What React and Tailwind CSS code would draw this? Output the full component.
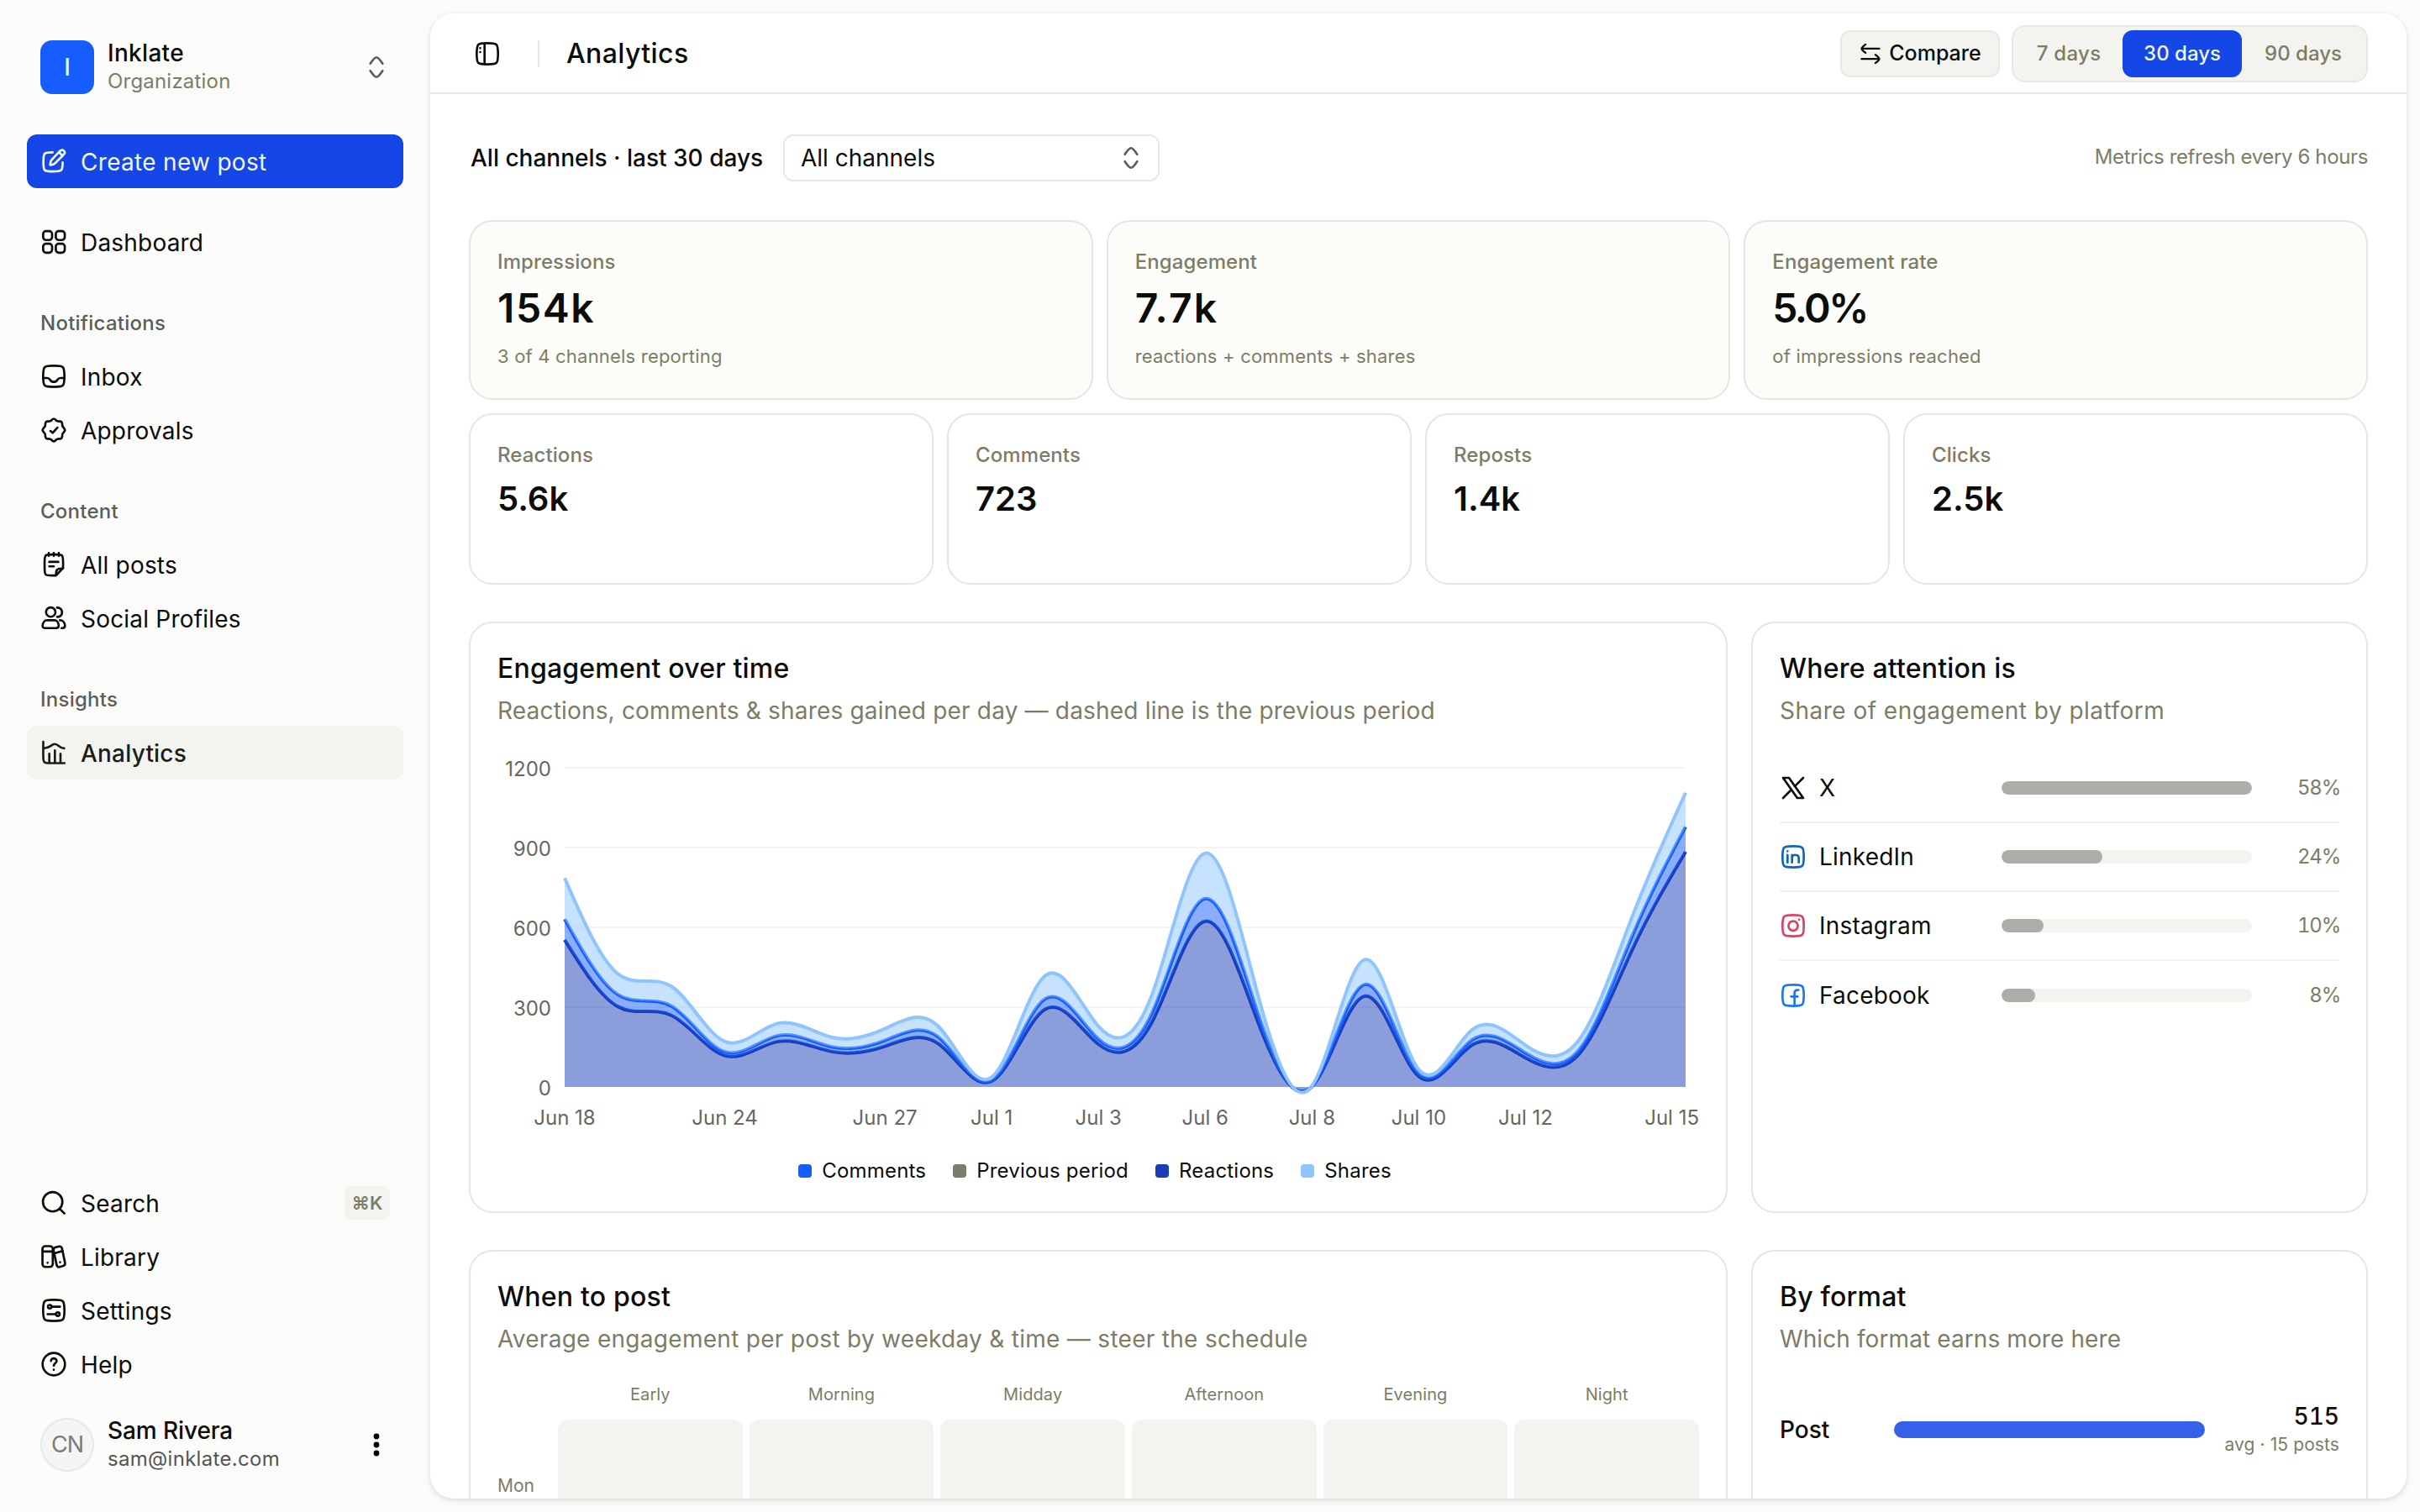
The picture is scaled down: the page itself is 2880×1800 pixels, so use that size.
import React from "react";

const SQUIRCLE =
  "M2.5 12C2.5 7.52 2.5 5.28 3.89 3.89C5.28 2.5 7.52 2.5 12 2.5C16.48 2.5 18.72 2.5 20.11 3.89C21.5 5.28 21.5 7.52 21.5 12C21.5 16.48 21.5 18.72 20.11 20.11C18.72 21.5 16.48 21.5 12 21.5C7.52 21.5 5.28 21.5 3.89 20.11C2.5 18.72 2.5 16.48 2.5 12Z";

function Icon({ className = "size-8", children, stroke = 2 }) {
  return (
    <svg
      viewBox="0 0 24 24"
      fill="none"
      stroke="currentColor"
      strokeWidth={stroke}
      strokeLinecap="round"
      strokeLinejoin="round"
      className={`shrink-0 ${className}`}
    >
      {children}
    </svg>
  );
}

const icons = {
  edit: (
    <>
      <path d="M11 4C7.2 4 5.1 4 3.9 5.2C2.75 6.4 2.75 8.5 2.75 12.5C2.75 16.6 2.75 18.7 3.9 19.9C5.1 21.1 7.2 21.1 11.3 21.1C15.4 21.1 17.5 21.1 18.7 19.9C19.9 18.7 19.9 16.7 19.9 13" />
      <path d="M16.7 3.6L18 2.5C18.9 1.8 20.2 1.8 21 2.6C21.9 3.4 21.9 4.7 21.1 5.6L20 6.9L13 13.9C12.1 14.8 10.6 15.2 8.9 15.4C8.7 13.9 9.1 12 10.2 10.6L16.7 3.6ZM16.7 3.9L19.8 7" />
    </>
  ),
  dashboard: (
    <>
      <rect x="2.5" y="2.3" width="8" height="8" rx="2.6" />
      <rect x="13.8" y="2.3" width="8" height="8" rx="2.6" />
      <rect x="2.5" y="13.6" width="8" height="8" rx="2.6" />
      <rect x="13.8" y="13.6" width="8" height="8" rx="2.6" />
    </>
  ),
  inbox: (
    <>
      <path d={SQUIRCLE} />
      <path d="M2.5 13.5H6C7.4 13.5 8.1 14.1 8.6 15C9.3 16.3 10.5 17 12 17C13.5 17 14.7 16.3 15.4 15C15.9 14.1 16.6 13.5 18 13.5H21.5" />
    </>
  ),
  approvals: (
    <>
      <path d="M12 1.9C13.2 1.9 14 3.6 15.1 4C16.2 4.5 18 3.8 18.9 4.7C19.8 5.6 19.4 7.4 19.8 8.5C20.3 9.6 22 10.7 22 12C22 13.3 20.3 14.4 19.8 15.5C19.4 16.6 19.8 18.4 18.9 19.3C18 20.2 16.2 19.5 15.1 20C14 20.4 13.2 22.1 12 22.1C10.8 22.1 10 20.4 8.9 20C7.8 19.5 6 20.2 5.1 19.3C4.2 18.4 4.6 16.6 4.2 15.5C3.7 14.4 2 13.3 2 12C2 10.7 3.7 9.6 4.2 8.5C4.6 7.4 4.2 5.6 5.1 4.7C6 3.8 7.8 4.5 8.9 4C10 3.6 10.8 1.9 12 1.9Z" />
      <path d="M9 12.8L11 14.5L15.2 9.8" />
    </>
  ),
  posts: (
    <>
      <path d="M7.5 1.8V4.4M12 1.8V4.4M16.5 1.8V4.4" />
      <path d="M3.8 10C3.8 6.7 3.8 5.1 4.8 4C5.8 3.1 7.3 3.1 10.4 3.1H13.7C16.8 3.1 18.3 3.1 19.3 4C20.3 5.1 20.3 6.7 20.3 10V15L14 21.9H10.4C7.3 21.9 5.8 21.9 4.8 20.9C3.8 19.9 3.8 18.3 3.8 15Z" />
      <path d="M14 21.5C14 17.6 14 15.4 20.2 15.6M8 9.7H16M8 13.7H12" />
    </>
  ),
  profiles: (
    <>
      <circle cx="9.3" cy="6.5" r="4.2" />
      <path d="M15 2.5C17.4 2.4 19.4 4 19.4 6.7C19.4 9.1 17.6 10.9 15 10.8" />
      <path d="M5.9 13.8H12.7C14.7 13.8 16.3 15.9 16.4 18.6C16.4 20 15.6 20.8 14.2 20.8H4.2C2.8 20.8 1.9 20 2 18.6C2.2 15.9 3.9 13.8 5.9 13.8Z" />
      <path d="M17.5 13.8C20.2 13.8 21.9 16 22 18.6C22 20 21.2 20.8 19.8 20.8H19" />
    </>
  ),
  analytics: (
    <>
      <path d="M2.6 2.4V15C2.6 18 2.6 19.5 3.6 20.5C4.5 21.4 6 21.4 9 21.4H21.6" />
      <path d="M8 13V20.5M13 10V20.5M18 13V20.5" />
      <path d="M2.8 7.9C8.5 8.6 9.5 4.3 13 4.3C16.3 4.3 16.7 8.2 21.3 8.2" />
    </>
  ),
  search: (
    <>
      <circle cx="11" cy="11" r="8.7" />
      <path d="M17.4 17.4L21.5 21.5" />
    </>
  ),
  library: (
    <>
      <rect x="1.9" y="2.6" width="9.2" height="18.6" rx="2.6" />
      <path d="M2.2 7.4H11M12.6 9L20 7" />
      <path d="M11.9 6.9C11.5 5.5 11.9 4.2 13.3 3.8L16.3 3C17.7 2.6 18.9 3.2 19.3 4.6L22 17.3C22.3 18.8 21.8 19.9 20.5 20.3L17.3 21.2C16 21.5 14.9 20.9 14.6 19.6Z" />
      <path d="M6.5 17.5V17.51M17.6 17V17.01" />
    </>
  ),
  settings: (
    <>
      <path d={SQUIRCLE} />
      <circle cx="8.4" cy="8.7" r="1.6" />
      <circle cx="15.6" cy="15.4" r="1.6" />
      <path d="M10.2 8.7H17.5M13.8 15.4H6.5" />
    </>
  ),
  help: (
    <>
      <circle cx="12" cy="12" r="10" />
      <path d="M9.5 9.2C9.5 7.8 10.6 6.8 12 6.8C13.4 6.8 14.6 7.8 14.6 9.2C14.6 11 12 11.2 12 13.4M12 16.9V17" />
    </>
  ),
  updown: (
    <path d="M17.5 8.8C17.5 8.8 13.8 3.2 12 3.2C10.2 3.2 6.5 8.8 6.5 8.8M17.5 15.2C17.5 15.2 13.8 20.8 12 20.8C10.2 20.8 6.5 15.2 6.5 15.2" />
  ),
  panel: (
    <>
      <path d={SQUIRCLE} />
      <path d="M9.5 2.8V21.2M5.6 7V7.01M5.6 10.5V10.51" />
    </>
  ),
  compare: (
    <>
      <path d="M21 6.8H3.4M7 2.5C7 2.5 3 5.6 3 6.8C3 8 7 11 7 11" />
      <path d="M3 17.3H20.6M17 13C17 13 21 16.1 21 17.3C21 18.5 17 21.5 17 21.5" />
    </>
  ),
  x: <path d="M3 21L10.5 13.5M21 3L13.4 10.6M3 3H8.3L21 21H15.7L3 3Z" />,
  linkedin: (
    <>
      <path d={SQUIRCLE} />
      <path d="M7 10.3V17M11 17V10.3M11 13C11 11.4 12.3 10.3 14 10.3C15.7 10.3 17 11.4 17 13.2V17M7 7V7.01" />
    </>
  ),
  instagram: (
    <>
      <path d={SQUIRCLE} />
      <circle cx="12" cy="12.2" r="4.2" />
      <path d="M17.3 6.7V6.71" />
    </>
  ),
  facebook: (
    <>
      <path d={SQUIRCLE} />
      <path d="M16.8 7.2H15.9C14.2 7.2 13.2 8.2 13.2 9.9V21.3M10.2 13H16" />
    </>
  ),
};

function NavItem({ icon, label, active, children }) {
  return (
    <div
      className={`flex h-16 items-center gap-4 rounded-[12px] px-4 text-[28px] tracking-[0.2px] ${
        active ? "bg-[#f3f4ef] font-medium text-[#1d1d18]" : "text-[#0c0c09]"
      }`}
    >
      <Icon>{icons[icon]}</Icon>
      <span className="flex-1 pt-px">{label}</span>
      {children}
    </div>
  );
}

function NavLabel({ children }) {
  return (
    <div className="flex h-16 items-center px-4 pt-px text-[24px] font-medium tracking-[0.25px] text-[#5c5c59]">
      {children}
    </div>
  );
}

function Sidebar() {
  return (
    <aside className="flex w-[512px] shrink-0 flex-col px-8 py-8">
      {/* Organization switcher */}
      <div className="flex h-24 items-center gap-4 px-4">
        <div className="flex size-16 items-center justify-center rounded-[14px] bg-[#155dfc] text-[28px] font-medium text-[#eff6ff]">
          I
        </div>
        <div className="flex-1">
          <p className="text-[28px] leading-[34px] font-medium tracking-[0.3px]">
            Inklate
          </p>
          <p className="text-[24px] leading-[34px] tracking-[0.2px] text-[#7c7c67]">
            Organization
          </p>
        </div>
        <Icon className="size-8 text-[#5c5c59]">{icons.updown}</Icon>
      </div>

      <div className="mt-8 flex h-16 items-center gap-4 rounded-[12px] bg-[#1447e6] px-4 text-[28px] tracking-[0.3px] text-[#eff6ff]">
        <Icon>{icons.edit}</Icon>
        <span className="pt-px">Create new post</span>
      </div>

      <nav className="mt-8 flex flex-col gap-8">
        <NavItem icon="dashboard" label="Dashboard" />
        <div>
          <NavLabel>Notifications</NavLabel>
          <NavItem icon="inbox" label="Inbox" />
          <NavItem icon="approvals" label="Approvals" />
        </div>
        <div>
          <NavLabel>Content</NavLabel>
          <NavItem icon="posts" label="All posts" />
          <NavItem icon="profiles" label="Social Profiles" />
        </div>
        <div>
          <NavLabel>Insights</NavLabel>
          <NavItem icon="analytics" label="Analytics" active />
        </div>
      </nav>

      <div className="mt-auto">
        <NavItem icon="search" label="Search">
          <kbd className="flex h-10 w-[54px] items-center justify-center rounded-[8px] bg-[#f3f4ef] font-['Inter'] text-[22px] font-semibold tracking-normal text-[#7c7c67]">
            ⌘K
          </kbd>
        </NavItem>
        <NavItem icon="library" label="Library" />
        <NavItem icon="settings" label="Settings" />
        <NavItem icon="help" label="Help" />
      </div>

      {/* Signed-in user */}
      <div className="mt-4 flex h-24 items-center gap-4 px-4">
        <div className="flex size-16 items-center justify-center rounded-full border-2 border-[#e8e8e8] bg-[#f5f5f5] text-[27px] tracking-[-1px] text-[#7b7b7b]">
          CN
        </div>
        <div className="flex-1">
          <p className="text-[28px] leading-[34px] font-medium tracking-[-0.1px]">
            Sam Rivera
          </p>
          <p className="text-[24px] leading-[34px] tracking-[0.3px] text-[#555552]">
            sam@inklate.com
          </p>
        </div>
        <svg viewBox="0 0 32 32" className="size-8">
          <circle cx="16" cy="6" r="3.4" />
          <circle cx="16" cy="16" r="3.4" />
          <circle cx="16" cy="26" r="3.4" />
        </svg>
      </div>
    </aside>
  );
}

function Header() {
  return (
    <header className="flex h-24 shrink-0 items-center border-b-2 border-[#e8e8e3] pt-px pr-[46px] pl-[52px]">
      <Icon>{icons.panel}</Icon>
      <div className="ml-11 h-8 w-0.5 bg-[#e8e8e3]" />
      <h1 className="ml-8 text-[32px] font-medium tracking-[0.4px]">
        Analytics
      </h1>
      <div className="ml-auto flex h-14 w-[190px] items-center justify-center gap-2 rounded-[12px] border-2 border-[#e8e8e3] bg-[#f3f4ef] text-[25px] font-medium">
        <Icon className="size-7">{icons.compare}</Icon>
        Compare
      </div>
      <div className="ml-3.5 flex h-[68px] items-center rounded-[16px] border-2 border-[#e8e8e3] bg-[#f3f4ef] px-1 text-[24px] font-medium text-[#7c7c67]">
        <div className="w-[126px] pr-0.5 text-center tracking-[0.3px]">
          7 days
        </div>
        <div className="flex h-14 w-[142px] items-center justify-center rounded-[12px] bg-[#1447e6] text-[#eff6ff]">
          30 days
        </div>
        <div className="w-[144px] pl-0.5 text-center">90 days</div>
      </div>
    </header>
  );
}

const totals = [
  {
    label: "Impressions",
    value: "154k",
    note: "3 of 4 channels reporting",
    tracking: "tracking-[1.6px]",
  },
  {
    label: "Engagement",
    value: "7.7k",
    note: "reactions + comments + shares",
    tracking: "tracking-[2.2px]",
  },
  {
    label: "Engagement rate",
    value: "5.0%",
    note: "of impressions reached",
    tracking: "tracking-[-2.6px]",
  },
];

const breakdown = [
  { label: "Reactions", value: "5.6k" },
  { label: "Comments", value: "723" },
  { label: "Reposts", value: "1.4k" },
  { label: "Clicks", value: "2.5k" },
];

function Stats() {
  return (
    <>
      <div className="mt-[46px] grid grid-cols-3 gap-4">
        {totals.map((s) => (
          <div
            key={s.label}
            className="h-[214px] rounded-[28px] border-2 border-[#e5e5e3] bg-[#fcfdf8] p-8"
          >
            <p className="text-[24px] leading-8 font-medium tracking-[0.1px] text-[#7c7c67]">
              {s.label}
            </p>
            <p
              className={`mt-[9px] text-[48px] leading-[60px] font-semibold ${s.tracking}`}
            >
              {s.value}
            </p>
            <p className="mt-[11px] text-[22px] leading-8 tracking-[0.2px] text-[#7c7c67]">
              {s.note}
            </p>
          </div>
        ))}
      </div>
      <div className="mt-4 grid grid-cols-4 gap-4">
        {breakdown.map((s) => (
          <div
            key={s.label}
            className="h-[204px] rounded-[28px] border-2 border-[#e5e5e3] bg-white p-8"
          >
            <p className="text-[24px] leading-8 font-medium tracking-[0.1px] text-[#7c7c67]">
              {s.label}
            </p>
            <p className="mt-[11px] text-[40px] leading-[50px] font-semibold">
              {s.value}
            </p>
          </div>
        ))}
      </div>
    </>
  );
}

// Cumulative tops of the stacked series, one entry per day
const reactions = [
  553, 302, 269, 118, 171, 133, 153, 163, 22, 292, 161, 243, 623, 238, 2, 342,
  40, 158, 110, 123, 516, 884,
];
const comments = [
  631, 347, 304, 132, 193, 151, 175, 188, 26, 331, 180, 276, 708, 270, 2, 386,
  52, 177, 128, 139, 568, 978,
];
const shares = [
  785, 425, 378, 171, 239, 187, 219, 228, 37, 418, 228, 345, 879, 337, 4, 479,
  66, 215, 157, 176, 640, 1106,
];

const PLOT = { left: 80, right: 1414, top: 14, bottom: 394 };
const px = (i) => PLOT.left + ((PLOT.right - PLOT.left) * i) / 21;
const py = (v) => PLOT.bottom - ((PLOT.bottom - PLOT.top) * v) / 1200;

// Control points of a natural cubic spline
function controls(p) {
  const n = p.length - 1;
  const a = new Array(n);
  const b = new Array(n);
  const r = new Array(n);
  a[0] = 0;
  b[0] = 2;
  r[0] = p[0] + 2 * p[1];
  for (let i = 1; i < n - 1; i++) {
    a[i] = 1;
    b[i] = 4;
    r[i] = 4 * p[i] + 2 * p[i + 1];
  }
  a[n - 1] = 2;
  b[n - 1] = 7;
  r[n - 1] = 8 * p[n - 1] + p[n];
  for (let i = 1; i < n; i++) {
    const m = a[i] / b[i - 1];
    b[i] -= m;
    r[i] -= m * r[i - 1];
  }
  a[n - 1] = r[n - 1] / b[n - 1];
  for (let i = n - 2; i >= 0; i--) a[i] = (r[i] - a[i + 1]) / b[i];
  b[n - 1] = (p[n] + a[n - 1]) / 2;
  for (let i = 0; i < n - 1; i++) b[i] = 2 * p[i + 1] - a[i + 1];
  return [a, b];
}

function spline(points) {
  const xs = points.map((p) => p[0]);
  const ys = points.map((p) => p[1]);
  const [ax, bx] = controls(xs);
  const [ay, by] = controls(ys);
  let d = "";
  for (let i = 0; i < points.length - 1; i++) {
    d += `C${ax[i]},${ay[i]} ${bx[i]},${by[i]} ${xs[i + 1]},${ys[i + 1]}`;
  }
  return d;
}

function AreaSeries({ values, base, color }) {
  const top = values.map((v, i) => [px(i), py(v)]);
  const low = base.map((v, i) => [px(i), py(v)]).reverse();
  const line = `M${top[0]}${spline(top)}`;
  return (
    <g>
      <path d={`${line}L${low[0]}${spline(low)}Z`} fill={color} opacity="0.5" />
      <path d={line} fill="none" stroke={color} strokeWidth="4" />
    </g>
  );
}

const xLabels = [
  [0, "Jun 18"],
  [3, "Jun 24"],
  [6, "Jun 27"],
  [8, "Jul 1"],
  [10, "Jul 3"],
  [12, "Jul 6"],
  [14, "Jul 8"],
  [16, "Jul 10"],
  [18, "Jul 12"],
];

const legend = [
  ["Comments", "bg-[#155dfc]"],
  ["Previous period", "bg-[#7c7c67]"],
  ["Reactions", "bg-[#193cb8]"],
  ["Shares", "bg-[#8ec5ff]"],
];

function Card({ title, subtitle, className, tracking, children }) {
  return (
    <section
      className={`rounded-[28px] border-2 border-[#e5e5e3] bg-white px-8 pt-8 ${className}`}
    >
      <h2 className="text-[32px] leading-[44px] font-medium tracking-[0.2px]">
        {title}
      </h2>
      <p className={`mt-2 text-[28px] leading-10 text-[#7c7c67] ${tracking}`}>
        {subtitle}
      </p>
      {children}
    </section>
  );
}

function EngagementChart() {
  return (
    <Card
      title="Engagement over time"
      subtitle="Reactions, comments & shares gained per day — dashed line is the previous period"
      className="h-[704px] w-[1498px]"
      tracking="tracking-[0.18px]"
    >
      <svg
        viewBox="0 0 1440 460"
        className="mt-[34px] h-[460px] w-[1440px] overflow-visible text-[24px]"
      >
        {[0, 300, 600, 900, 1200].map((v) => (
          <g key={v}>
            {v > 0 && (
              <path
                d={`M${PLOT.left} ${py(v)}H${PLOT.right}`}
                stroke="#f3f3f1"
                strokeWidth="2"
              />
            )}
            <text x="64" y={py(v) + 10} textAnchor="end" fill="#666663">
              {v}
            </text>
          </g>
        ))}
        <AreaSeries
          values={reactions}
          base={reactions.map(() => 0)}
          color="#193cb8"
        />
        <AreaSeries values={comments} base={reactions} color="#155dfc" />
        <AreaSeries values={shares} base={comments} color="#8ec5ff" />
        {xLabels.map(([i, label]) => (
          <text
            key={label}
            x={px(i)}
            y="439"
            textAnchor="middle"
            fill="#666663"
          >
            {label}
          </text>
        ))}
        <text x="1430" y="439" textAnchor="end" fill="#666663">
          Jul 15
        </text>
      </svg>
      <div className="mt-[18px] ml-[-8px] flex justify-center gap-8 text-[24px] leading-8 tracking-[0.2px]">
        {legend.map(([label, color]) => (
          <div key={label} className="flex items-center gap-3">
            <span className={`size-4 rounded-[4px] ${color}`} />
            {label}
          </div>
        ))}
      </div>
    </Card>
  );
}

const platforms = [
  { icon: "x", name: "X", color: "text-[#0c0c09]", share: 58, width: 100 },
  {
    icon: "linkedin",
    name: "LinkedIn",
    color: "text-[#0a66c2]",
    share: 24,
    width: 40.3,
  },
  {
    icon: "instagram",
    name: "Instagram",
    color: "text-[#dd4060]",
    share: 10,
    width: 16.8,
  },
  {
    icon: "facebook",
    name: "Facebook",
    color: "text-[#1877f2]",
    share: 8,
    width: 13.4,
  },
];

function Platforms() {
  return (
    <Card
      title="Where attention is"
      subtitle="Share of engagement by platform"
      className="h-[704px] flex-1"
      tracking="tracking-[0.48px]"
    >
      <ul className="mt-8 divide-y-2 divide-[#f2f2f0]">
        {platforms.map((p) => (
          <li key={p.name} className="flex h-[82px] items-center">
            <Icon className={`size-8 ${p.color}`}>{icons[p.icon]}</Icon>
            <span className="ml-[15px] w-[217px] text-[28px] tracking-[0.2px]">
              {p.name}
            </span>
            <div className="h-4 w-[298px] overflow-hidden rounded-full bg-[#f3f4ef]">
              <div
                className="h-full rounded-full bg-[#adada9]"
                style={{ width: `${p.width}%` }}
              />
            </div>
            <span className="mr-[-1px] ml-auto text-[24px] tracking-[-1.2px] text-[#7c7c67] tabular-nums">
              {p.share}%
            </span>
          </li>
        ))}
      </ul>
    </Card>
  );
}

const slots = ["Early", "Morning", "Midday", "Afternoon", "Evening", "Night"];

function WhenToPost() {
  return (
    <Card
      title="When to post"
      subtitle="Average engagement per post by weekday & time — steer the schedule"
      className="h-[800px] w-[1498px]"
      tracking="tracking-[0.29px]"
    >
      <div className="mt-[30px] grid grid-cols-[64px_repeat(6,1fr)] gap-x-2 text-[#7c7c67]">
        <span />
        {slots.map((s) => (
          <span
            key={s}
            className="h-[46px] text-center text-[20px] leading-8 tracking-[0.1px]"
          >
            {s}
          </span>
        ))}
        <span className="self-center text-[21px]">Mon</span>
        {slots.map((s) => (
          <div key={s} className="h-[158px] rounded-[12px] bg-[#f3f4ef]" />
        ))}
      </div>
    </Card>
  );
}

function ByFormat() {
  return (
    <Card
      title="By format"
      subtitle="Which format earns more here"
      className="h-[800px] flex-1"
      tracking="tracking-[0.1px]"
    >
      <div className="mt-[54px] flex items-center">
        <span className="w-[136px] text-[28px] font-medium">Post</span>
        <div className="h-5 w-[370px] rounded-full bg-[#3660e8]" />
        <div className="ml-auto text-right">
          <p className="text-[28px] leading-9 font-medium tabular-nums">515</p>
          <p className="text-[21px] leading-8 tracking-[0.1px] text-[#7c7c67]">
            avg · 15 posts
          </p>
        </div>
      </div>
    </Card>
  );
}

function App() {
  return (
    <div className="flex h-[1800px] w-[2880px] overflow-hidden bg-[#fbfbf9] font-['Inter',sans-serif] text-[#0c0c09]">
      <Sidebar />
      <main className="my-4 mr-4 flex flex-1 flex-col overflow-hidden rounded-[28px] bg-white shadow-[0_2px_6px_rgba(0,0,0,0.14)]">
        <Header />
        <div className="px-[46px] pt-12">
          <div className="flex h-14 items-center">
            <h2 className="ml-0.5 w-[346px] text-[28px] font-medium whitespace-nowrap">
              All channels · last 30 days
            </h2>
            <div className="ml-[26px] flex h-14 w-[448px] items-center justify-between rounded-[12px] border-2 border-[#e8e8e3] pr-4 pl-[19px] text-[28px]">
              All channels
              <Icon className="size-8 text-[#5c5c59]">{icons.updown}</Icon>
            </div>
            <p className="ml-auto pb-0.5 text-[24px] tracking-[-0.37px] text-[#7c7c67]">
              Metrics refresh every 6 hours
            </p>
          </div>
          <Stats />
          <div className="mt-11 flex gap-7">
            <EngagementChart />
            <Platforms />
          </div>
          <div className="mt-11 flex gap-7">
            <WhenToPost />
            <ByFormat />
          </div>
        </div>
      </main>
    </div>
  );
}

export default App;
